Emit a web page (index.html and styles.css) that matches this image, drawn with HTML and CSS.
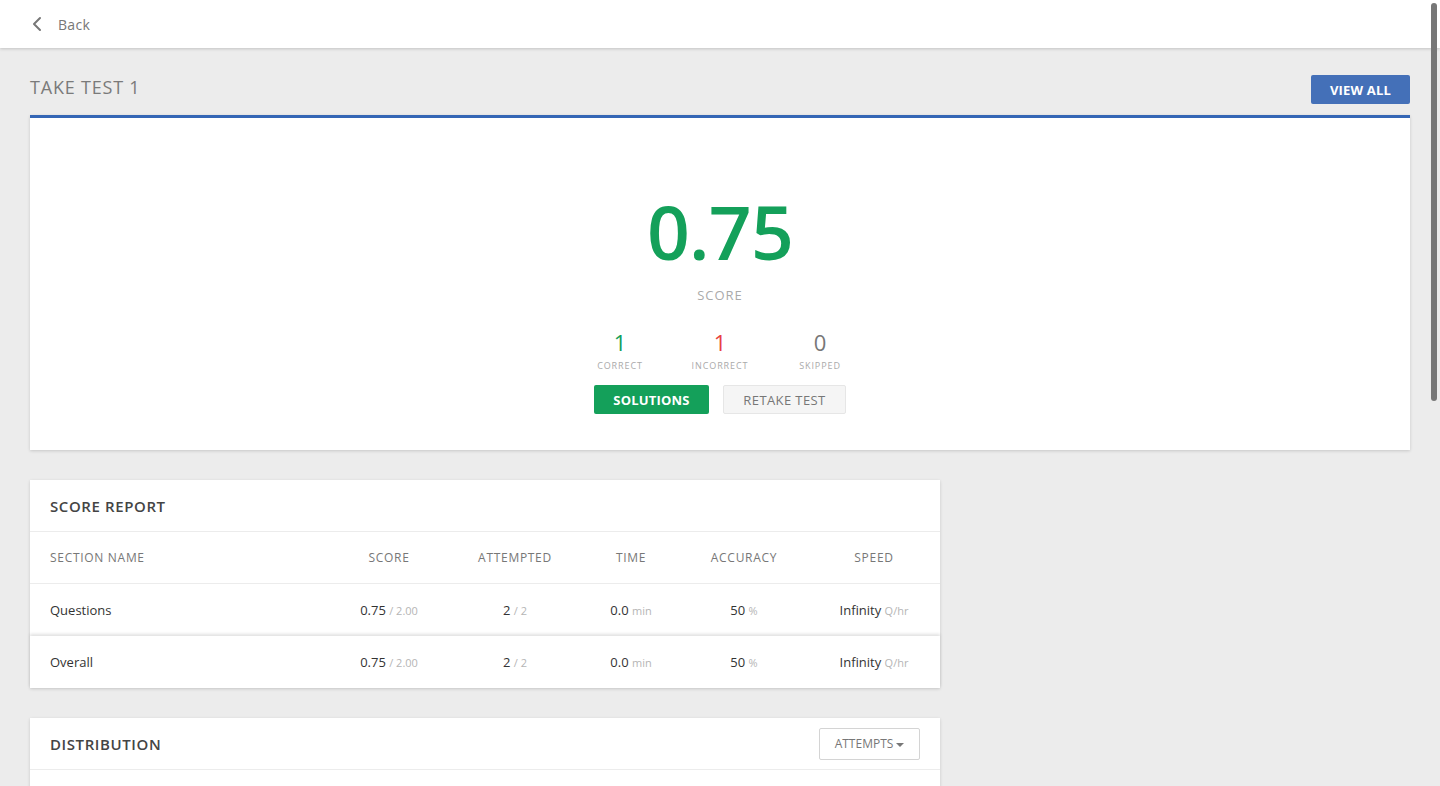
FILE: index.html
```html
<!DOCTYPE html>
<html>
<head>
<meta charset="utf-8">
<title>Take Test 1</title>
<link rel="stylesheet" href="styles.css">
</head>
<body>
<header class="topbar">
  <a class="back" href="#">
    <svg class="back-icon" width="10" height="16" viewBox="0 0 10 16"><path d="M8 2 L2 8 L8 14" fill="none" stroke="#777" stroke-width="2" stroke-linecap="round" stroke-linejoin="round"/></svg>
    <span>Back</span>
  </a>
</header>

<main class="page">
  <div class="title-row">
    <h1 class="page-title">TAKE TEST 1</h1>
    <button class="btn-primary">VIEW ALL</button>
  </div>

  <section class="card result-card">
    <div class="big-score">0.75</div>
    <div class="score-label">SCORE</div>
    <div class="stats">
      <div class="stat"><div class="stat-num green">1</div><div class="stat-label">CORRECT</div></div>
      <div class="stat"><div class="stat-num red">1</div><div class="stat-label">INCORRECT</div></div>
      <div class="stat"><div class="stat-num gray">0</div><div class="stat-label">SKIPPED</div></div>
    </div>
    <div class="actions">
      <button class="btn-green">SOLUTIONS</button>
      <button class="btn-light">RETAKE TEST</button>
    </div>
  </section>

  <section class="card report-card">
    <div class="card-head"><h2 class="card-title">SCORE REPORT</h2></div>
    <div class="trow thead">
      <div class="c-name">SECTION NAME</div>
      <div class="c">SCORE</div>
      <div class="c">ATTEMPTED</div>
      <div class="c">TIME</div>
      <div class="c">ACCURACY</div>
      <div class="c">SPEED</div>
    </div>
    <div class="trow tbody">
      <div class="c-name">Questions</div>
      <div class="c">0.75 <span class="sub">/ 2.00</span></div>
      <div class="c">2 <span class="sub">/ 2</span></div>
      <div class="c">0.0 <span class="sub">min</span></div>
      <div class="c">50 <span class="sub">%</span></div>
      <div class="c">Infinity <span class="sub">Q/hr</span></div>
    </div>
    <div class="trow tbody overall">
      <div class="c-name">Overall</div>
      <div class="c">0.75 <span class="sub">/ 2.00</span></div>
      <div class="c">2 <span class="sub">/ 2</span></div>
      <div class="c">0.0 <span class="sub">min</span></div>
      <div class="c">50 <span class="sub">%</span></div>
      <div class="c">Infinity <span class="sub">Q/hr</span></div>
    </div>
  </section>

  <section class="card dist-card">
    <div class="card-head">
      <h2 class="card-title">DISTRIBUTION</h2>
      <button class="btn-outline">ATTEMPTS <span class="caret"></span></button>
    </div>
    <div class="dist-body"></div>
  </section>
</main>

<div class="scrollbar"></div>
</body>
</html>
```

FILE: styles.css
```css
* { box-sizing: border-box; }
html, body { margin: 0; padding: 0; }
body {
  background: #ececec;
  font-family: "Open Sans", "Noto Sans", sans-serif;
  color: #333;
  height: 786px;
  overflow: hidden;
}
button { font-family: inherit; cursor: pointer; }

.topbar {
  height: 48px;
  background: #fff;
  box-shadow: 0 1px 3px rgba(0,0,0,0.18);
  display: flex;
  align-items: center;
  padding-left: 32px;
  position: relative;
  z-index: 2;
}
.back {
  display: flex;
  align-items: center;
  gap: 16px;
  text-decoration: none;
  color: #777;
  font-size: 14px;
  letter-spacing: 0.3px;
}
.back-icon { display: block; }

.page { padding: 0 30px; }

.title-row {
  display: flex;
  justify-content: space-between;
  align-items: flex-start;
  height: 67px;
  padding-top: 27px;
}
.page-title {
  margin: 0;
  font-size: 18px;
  line-height: 24px;
  font-weight: 400;
  color: #7a7a7a;
  letter-spacing: 0.8px;
}
.btn-primary {
  background: #4470b8;
  color: #fff;
  border: none;
  border-radius: 2px;
  font-size: 13px;
  font-weight: 700;
  height: 29px;
  width: 99px;
  letter-spacing: 0.2px;
  padding: 0;
}

.card {
  background: #fff;
  box-shadow: 0 1px 3px rgba(0,0,0,0.16);
}

.result-card {
  border-top: 3px solid #3466b5;
  height: 335px;
  display: flex;
  flex-direction: column;
  align-items: center;
  padding-top: 71px;
}
.big-score {
  font-size: 75px;
  font-weight: 600;
  color: #14a05a;
  line-height: 84px;
  letter-spacing: -0.8px;
}
.score-label {
  font-size: 13px;
  color: #aaa;
  letter-spacing: 1px;
  margin-top: 13px;
  line-height: 18px;
}
.stats {
  display: flex;
  margin-top: 25px;
}
.stat {
  width: 100px;
  text-align: center;
}
.stat-num {
  font-size: 22px;
  line-height: 26px;
  font-weight: 400;
}
.stat-num.green { color: #14a05a; }
.stat-num.red { color: #e8423f; }
.stat-num.gray { color: #777; }
.stat-label {
  font-size: 9px;
  color: #aaa;
  letter-spacing: 0.9px;
  margin-top: 5px;
  line-height: 12px;
}
.actions {
  display: flex;
  gap: 14px;
  margin-top: 13px;
}
.btn-green {
  background: #14a05a;
  color: #fff;
  border: none;
  border-radius: 2px;
  font-size: 13px;
  font-weight: 700;
  width: 115px;
  height: 29px;
  padding: 0;
  letter-spacing: 0.2px;
}
.btn-light {
  background: #f5f5f5;
  color: #777;
  border: 1px solid #e6e6e6;
  border-radius: 2px;
  font-size: 13px;
  font-weight: 400;
  width: 123px;
  height: 29px;
  padding: 0;
  letter-spacing: 0.4px;
}

.report-card {
  width: 910px;
  margin-top: 30px;
}
.card-head {
  height: 52px;
  border-bottom: 1px solid #ececec;
  display: flex;
  align-items: center;
  justify-content: space-between;
  padding: 0 20px;
}
.card-title {
  margin: 0;
  font-size: 15px;
  font-weight: 600;
  color: #444;
  letter-spacing: 0.6px;
}
.trow {
  display: grid;
  grid-template-columns: 280px 118px 134px 98px 128px 1fr;
  align-items: center;
  padding-left: 20px;
  height: 52px;
}
.thead {
  font-size: 12px;
  color: #777;
  letter-spacing: 0.7px;
  border-bottom: 1px solid #ececec;
}
.tbody {
  font-size: 13px;
  color: #333;
  height: 52px;
}
.overall {
  position: relative;
  box-shadow: 0 -2px 3px rgba(0,0,0,0.12);
  height: 52px;
}
.c { text-align: center; }
.sub { font-size: 11px; color: #b5b5b5; }

.dist-card {
  width: 910px;
  margin-top: 30px;
}
.dist-card .card-head { padding-right: 20px; }
.btn-outline {
  background: #fff;
  border: 1px solid #d4d4d4;
  border-radius: 2px;
  color: #777;
  font-size: 12px;
  height: 32px;
  width: 101px;
  padding: 0;
  display: flex;
  align-items: center;
  justify-content: center;
  gap: 3px;
}
.caret {
  width: 0; height: 0;
  border-left: 4px solid transparent;
  border-right: 4px solid transparent;
  border-top: 4px solid #777;
  margin-top: 2px;
}
.dist-body { height: 60px; }

.scrollbar {
  position: fixed;
  right: 3px;
  top: 3px;
  width: 6px;
  height: 398px;
  border-radius: 3px;
  background: #777;
  z-index: 5;
}
```
